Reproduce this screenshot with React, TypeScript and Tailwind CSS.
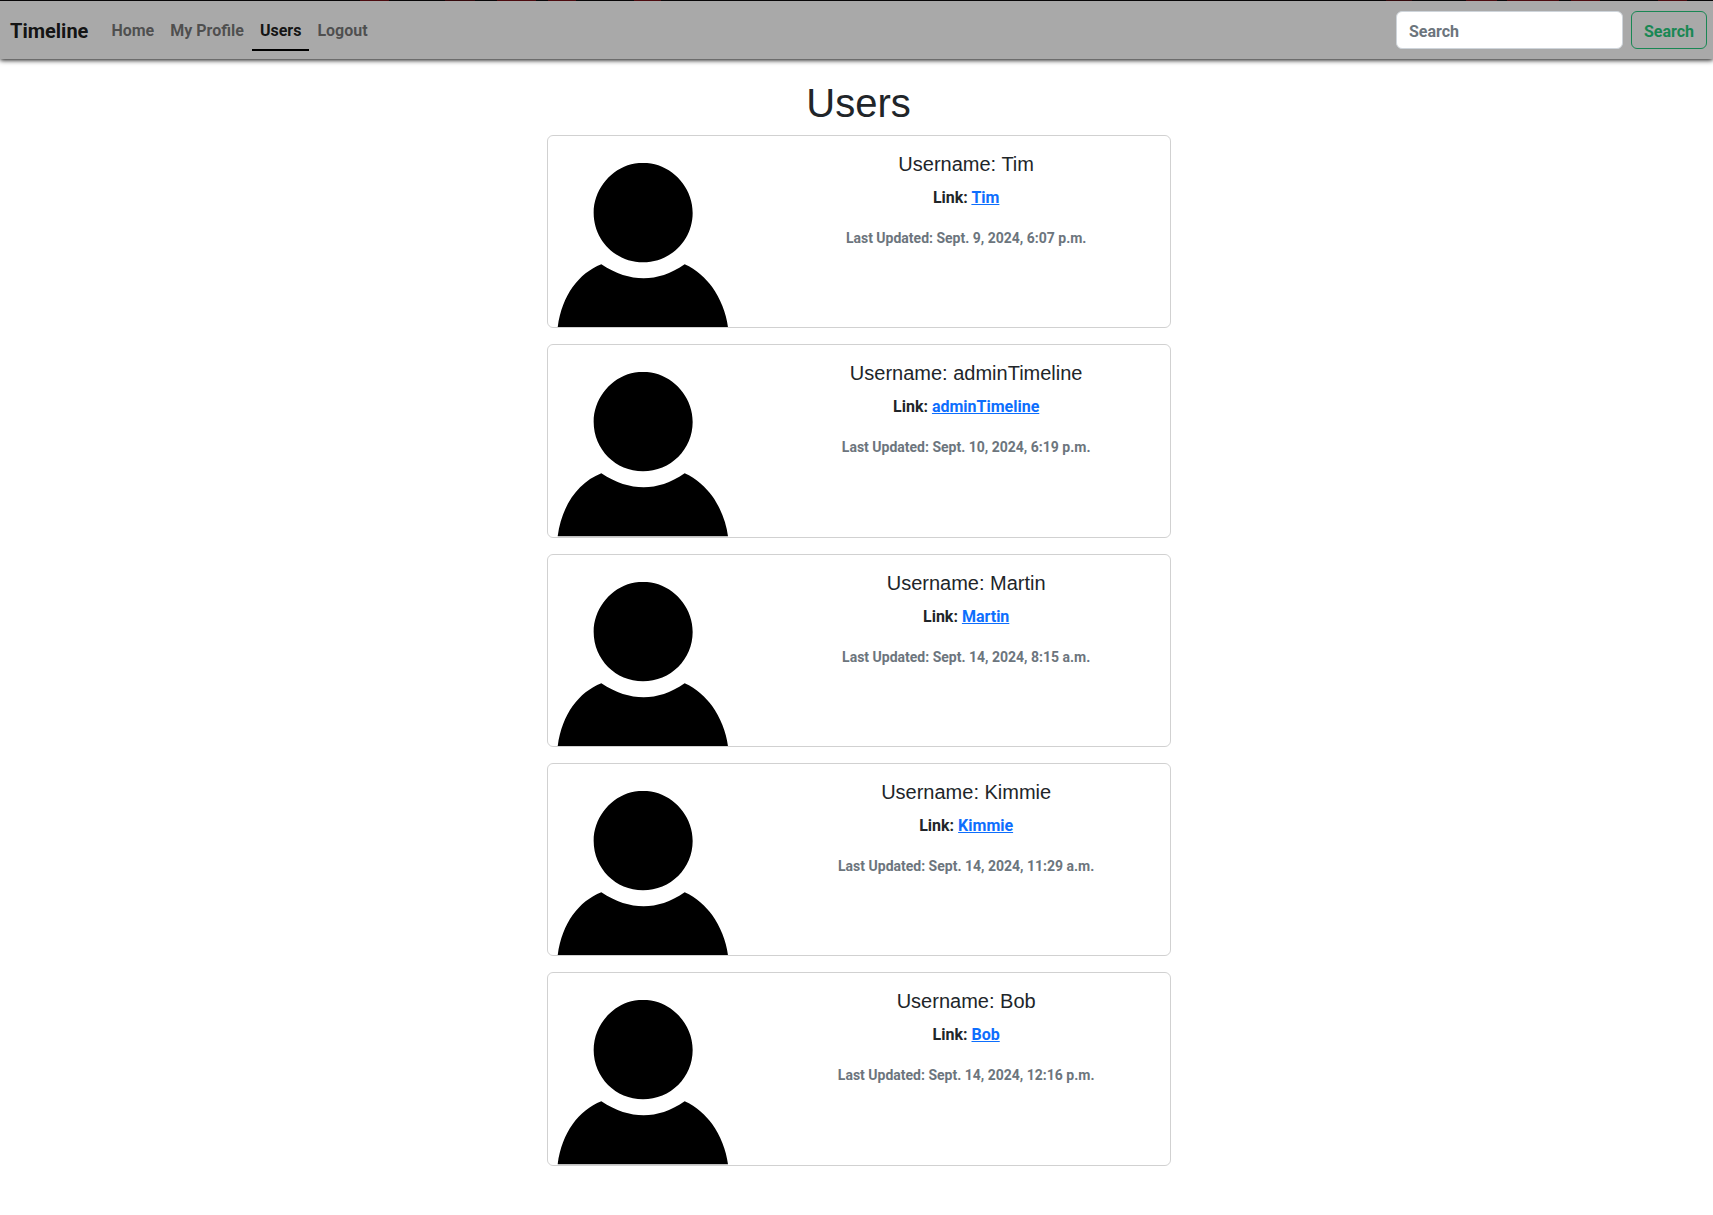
const users = [
  { name: "Tim", updated: "Sept. 9, 2024, 6:07 p.m." },
  { name: "adminTimeline", updated: "Sept. 10, 2024, 6:19 p.m." },
  { name: "Martin", updated: "Sept. 14, 2024, 8:15 a.m." },
  { name: "Kimmie", updated: "Sept. 14, 2024, 11:29 a.m." },
  { name: "Bob", updated: "Sept. 14, 2024, 12:16 p.m." },
];

const links = ["Home", "My Profile", "Users", "Logout"];

function Avatar() {
  return (
    <svg viewBox="0 0 574 574" className="block w-full" role="img" aria-label="Profile picture">
      <path d="M285 81C302 81 317 82 331 88C390 109 434 165 434 231C434 313 368 379 285 379C203 379 137 313 137 231C137 165 181 109 239 88C253 82 268 81 285 81Z" />
      <path d="M29 574C42 478 92 412 160 385C205 414 245 427 287 427C328 427 367 414 410 385C445 400 475 430 492 452C517 487 535 532 540 574Z" />
    </svg>
  );
}

function Navbar() {
  return (
    <header>
      <div className="h-px bg-[#0c090c] bg-[linear-gradient(90deg,transparent_21%,#6b1015_21%_22.7%,transparent_22.7%_26%,#4a0d12_26%_27.7%,transparent_27.7%_29%,#6b1015_29%_31.3%,transparent_31.3%_32%,#6b1015_32%_33.6%,transparent_33.6%_37%,#6b1015_37%_38.6%,transparent_38.6%_80.9%,#4a0d12_80.9%_82.4%,transparent_82.4%_85.6%,#6b1015_85.6%_87.4%,transparent_87.4%_88%,#6b1015_88%_91%,transparent_91%_91.7%,#6b1015_91.7%_93.4%,transparent_93.4%_96.8%,#6b1015_96.8%_98.5%,transparent_98.5%)]" />
      <nav className="flex items-center bg-[#a9a9a9] py-2 pr-1.5 pl-2.5 shadow-[0_1px_5px_#000]">
        <a href="#" className="mr-[15px] pt-0.5 text-xl leading-[30px] text-black/90">
          Timeline
        </a>
        <ul className="flex flex-1">
          {links.map((label) => (
            <li key={label}>
              <a
                href="#"
                aria-current={label === "Users" ? "page" : undefined}
                className={
                  label === "Users"
                    ? "block border-b-2 border-black px-2 pt-2.5 pb-1.5 text-black/90"
                    : "block border-b-2 border-transparent px-2 pt-2.5 pb-1.5 text-black/55"
                }
              >
                {label}
              </a>
            </li>
          ))}
        </ul>
        <form role="search" className="flex gap-2" onSubmit={(e) => e.preventDefault()}>
          <input
            type="search"
            placeholder="Search"
            aria-label="Search"
            className="h-[38px] w-[227px] rounded-md border border-[#ced4da] bg-white px-3 pt-0.5 placeholder:text-[#6c757d]"
          />
          <button type="submit" className="h-[38px] rounded-md border border-[#198754] px-3 pt-[3px] text-[#198754]">
            Search
          </button>
        </form>
      </nav>
    </header>
  );
}

export default function App() {
  return (
    <div className="min-h-screen bg-white font-['Roboto',sans-serif] text-base font-bold text-[#212529]">
      <Navbar />
      <main className="pt-5 pl-1">
        <div className="mx-auto max-w-[624px]">
          <h1 className="mb-2 text-center font-['Liberation_Sans',sans-serif] text-[40px] leading-[48px] font-normal">
            Users
          </h1>
          {users.map((user) => (
            <article
              key={user.name}
              className="mb-4 grid grid-cols-3 gap-6 overflow-hidden rounded-md border border-black/18"
            >
              <Avatar />
              <div className="col-span-2 p-4 text-center">
                <h2 className="mb-2.5 font-['Liberation_Sans',sans-serif] text-xl leading-6 font-normal">
                  Username: {user.name}
                </h2>
                <p className="mb-4">
                  Link:{" "}
                  <a href="#" className="text-[#0d6efd] underline">
                    {user.name}
                  </a>
                </p>
                <p className="text-sm leading-6 text-[#6c757d]">Last Updated: {user.updated}</p>
              </div>
            </article>
          ))}
        </div>
      </main>
    </div>
  );
}
